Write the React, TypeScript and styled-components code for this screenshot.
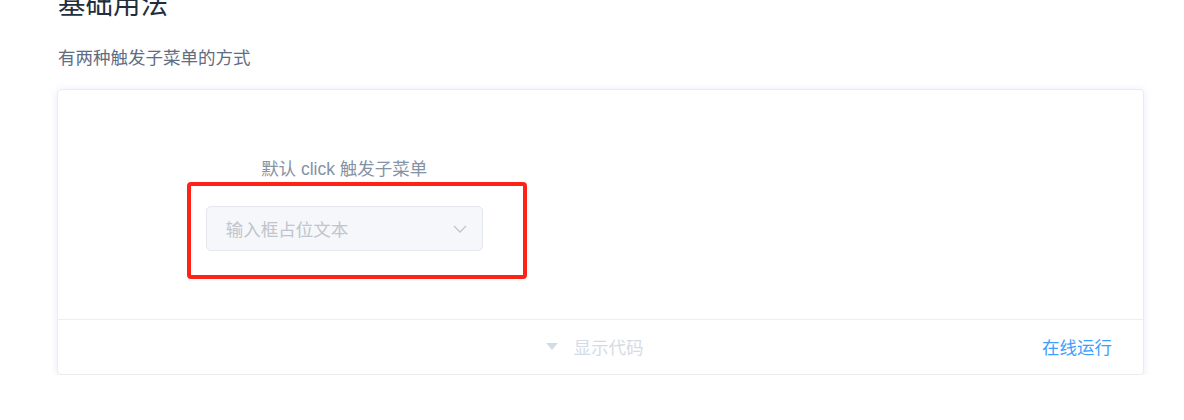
import React from 'react';
import styled, { createGlobalStyle } from 'styled-components';

const GlobalStyle = createGlobalStyle`
  html, body {
    margin: 0;
    padding: 0;
    background: #ffffff;
    overflow: hidden;
  }
  body {
    font-family: "Liberation Sans", "Noto Sans CJK SC", sans-serif;
  }
`;

const Page = styled.div`
  width: 1087px;
  padding-left: 57px;
`;

const Title = styled.h3`
  margin: -9px 0 0 1px;
  font-size: 27.5px;
  line-height: 27.5px;
  font-weight: 400;
  color: #1f2f3d;
`;

const Description = styled.p`
  margin: 26px 0 18px 1px;
  font-size: 17.5px;
  line-height: 26px;
  color: #5e6d82;
`;

const DemoCard = styled.div`
  border: 1px solid #ebebeb;
  border-radius: 4px;
  box-shadow: 0 0 10px 0 rgba(232, 237, 250, 0.6), 0 2.5px 5px 0 rgba(232, 237, 250, 0.5);
`;

const DemoSource = styled.div`
  padding: 30px;
`;

const Block = styled.div`
  width: 50%;
  padding: 37.5px 0;
  text-align: center;
`;

const Demonstration = styled.span`
  display: block;
  font-size: 17.5px;
  line-height: 24px;
  color: #8492a6;
  margin-bottom: 25px;
`;

const Highlighted = styled.div`
  position: relative;
  display: inline-block;
  vertical-align: top;
`;

const Marker = styled.div`
  position: absolute;
  left: -19px;
  top: -24px;
  right: -44px;
  bottom: -28px;
  border: 4px solid #ff2217;
  border-radius: 4px;
  pointer-events: none;
`;

const Cascader = styled.div`
  box-sizing: border-box;
  width: 277px;
  height: 45px;
  display: flex;
  align-items: center;
  justify-content: space-between;
  padding: 0 6px 0 19px;
  background: #f5f7fa;
  border: 1px solid #e4e7ed;
  border-radius: 5px;
  cursor: not-allowed;
`;

const Placeholder = styled.span`
  font-size: 17.5px;
  color: #c0c4cc;
`;

const Suffix = styled.span`
  width: 31px;
  display: flex;
  justify-content: center;
  align-items: center;
`;

const Footer = styled.div`
  height: 54px;
  border-top: 1px solid #eaeefb;
  display: grid;
  grid-template-columns: 1fr auto 1fr;
  align-items: center;
`;

const Toggle = styled.div`
  grid-column: 2;
  display: flex;
  align-items: center;
  gap: 16px;
  padding-right: 12px;
  color: #d3dce6;
  font-size: 17.5px;
`;

const RunLink = styled.a`
  grid-column: 3;
  justify-self: end;
  padding-right: 31px;
  font-size: 17.5px;
  color: #409eff;
  text-decoration: none;
`;

export default function App() {
  return (
    <>
      <GlobalStyle />
      <Page>
        <Title>基础用法</Title>
        <Description>有两种触发子菜单的方式</Description>
        <DemoCard>
          <DemoSource>
            <Block>
              <Demonstration>默认 click 触发子菜单</Demonstration>
              <Highlighted>
                <Cascader>
                  <Placeholder>输入框占位文本</Placeholder>
                  <Suffix>
                    <svg width="14" height="8" viewBox="0 0 14 8">
                      <polyline points="1,1 7,7 13,1" fill="none" stroke="#c0c4cc" strokeWidth="1.3" />
                    </svg>
                  </Suffix>
                </Cascader>
                <Marker />
              </Highlighted>
            </Block>
          </DemoSource>
          <Footer>
            <Toggle>
              <svg width="12" height="7" viewBox="0 0 12 7">
                <polygon points="0,0 12,0 6,7" fill="#d3dce6" />
              </svg>
              <span>显示代码</span>
            </Toggle>
            <RunLink href="#">在线运行</RunLink>
          </Footer>
        </DemoCard>
      </Page>
    </>
  );
}
